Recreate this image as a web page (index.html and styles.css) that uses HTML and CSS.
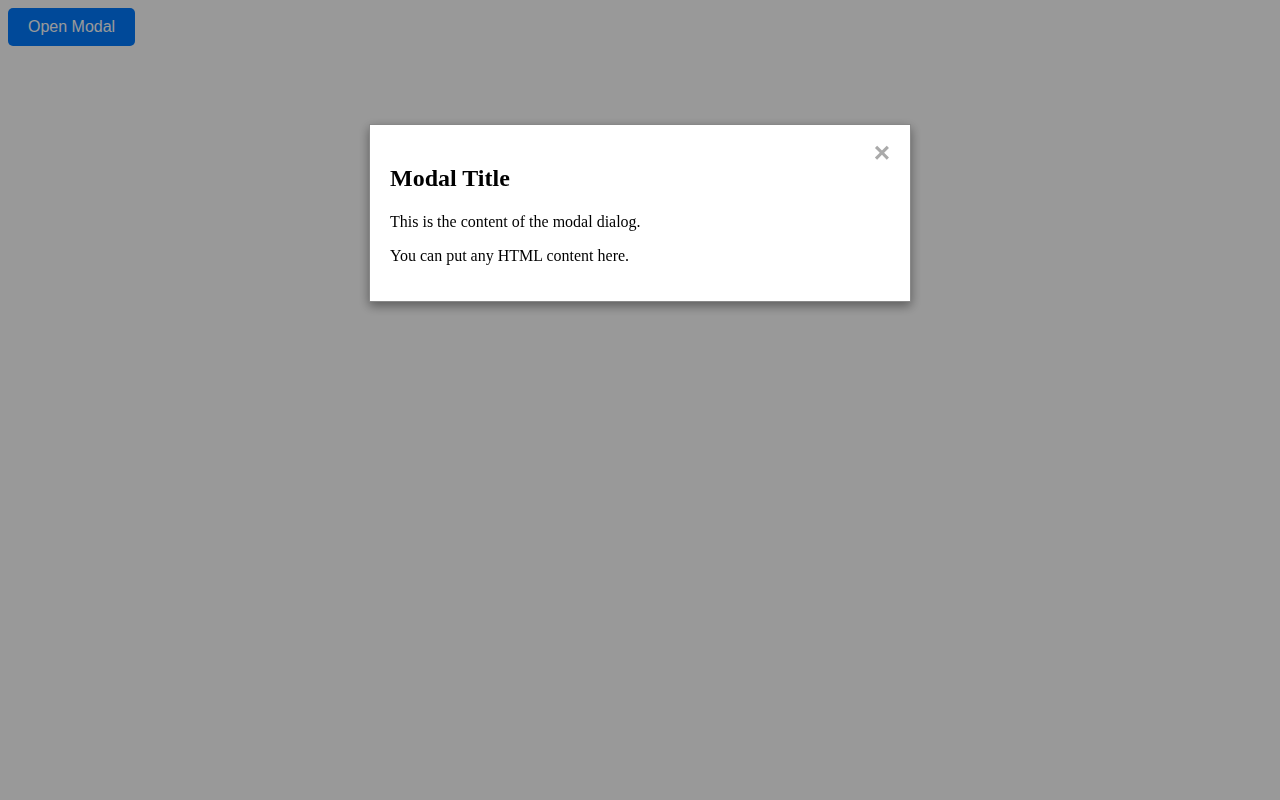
FILE: index.html
```html
<!DOCTYPE html>
<html>
<head>
<meta charset="utf-8">
<title>Modal</title>
<link rel="stylesheet" href="styles.css">
</head>
<body>
<button class="open-btn">Open Modal</button>
<div class="overlay">
  <div class="modal">
    <span class="close">&times;</span>
    <h2 class="modal-title">Modal Title</h2>
    <p class="modal-text">This is the content of the modal dialog.</p>
    <p class="modal-text">You can put any HTML content here.</p>
  </div>
</div>
</body>
</html>
```
FILE: styles.css
```css
html, body {
  margin: 0;
  padding: 0;
}
body {
  margin: 8px;
  font-family: "Liberation Serif", "Times New Roman", serif;
  background: #ffffff;
}
.open-btn {
  background: #007bff;
  color: #ffffff;
  border: none;
  border-radius: 5px;
  padding: 10px 20px;
  font-family: "Liberation Sans", Arial, sans-serif;
  font-size: 16px;
  line-height: 18px;
  cursor: pointer;
}
.overlay {
  position: fixed;
  inset: 0;
  background: rgba(0, 0, 0, 0.4);
  padding-top: 124px;
  box-sizing: border-box;
}
.modal {
  width: 500px;
  margin: 0 auto;
  padding: 20px;
  background: #ffffff;
  border: 1px solid #888888;
  box-shadow: 0 4px 10px rgba(0, 0, 0, 0.4);
}
.close {
  float: right;
  color: #aaaaaa;
  font-size: 28px;
  font-weight: bold;
  line-height: 16px;
  margin-top: 0;
  font-family: "Liberation Sans", Arial, sans-serif;
}
.modal-title {
  font-size: 24px;
  margin: 19.92px 0 20.92px;
}
.modal-text {
  font-size: 16px;
  margin: 16px 0;
}
```
